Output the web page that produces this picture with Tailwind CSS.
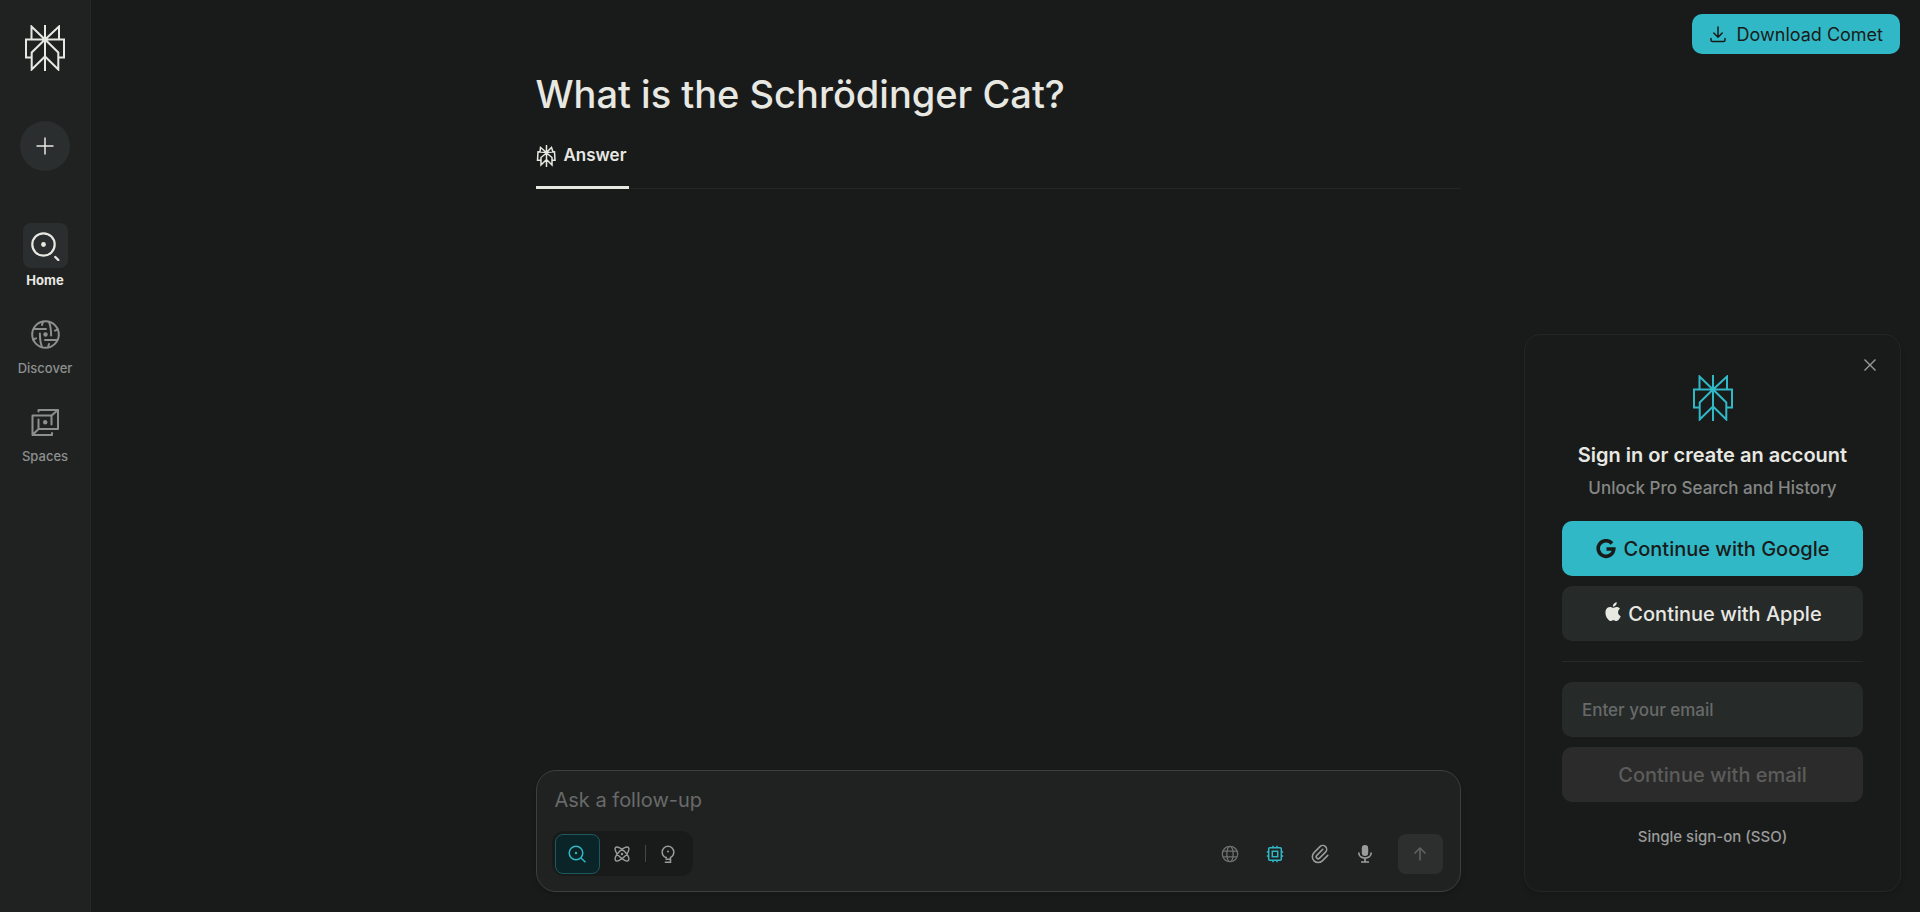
<!DOCTYPE html>
<html lang="en">
<head>
<meta charset="utf-8">
<meta name="viewport" content="width=device-width, initial-scale=1">
<title>What is the Schrödinger Cat?</title>
<script src="https://cdn.jsdelivr.net/npm/@tailwindcss/browser@4"></script>
</head>
<body class="flex h-screen overflow-hidden bg-[#191b1a] font-['Inter','Liberation_Sans',sans-serif] text-[#e8e8e3]">

<svg class="hidden" aria-hidden="true">
  <symbol id="logo" viewBox="0 0 40 46">
    <path fill="none" stroke="currentColor" d="M20 14.5H1V32.5H7M20 14.5H39V32.5H33M6.5 14.5V1.5L20 14.5 34 1.5V14.5M20 14.5 6.7 27.5V44.5L20 31.5 33.3 44.5V27.5ZM20 0V46"/>
  </symbol>
</svg>

<nav aria-label="Main" class="flex w-[91px] shrink-0 flex-col items-center border-r border-[#262828] bg-[#202222] pt-[25px]">
  <a href="#" aria-label="Perplexity home" class="block"><svg class="h-[46px] w-10 stroke-2"><use href="#logo"/></svg></a>
  <button type="button" aria-label="New thread" class="mt-[50px] grid size-[50px] place-items-center rounded-full bg-[#2a2e2e]">
    <svg class="size-[18px]" viewBox="0 0 18 18" fill="none" stroke="currentColor" stroke-width="1.5"><path d="M9 .5v17M.5 9h17"/></svg>
  </button>
  <ul class="mt-13 flex flex-col gap-[23px] text-[13px] leading-4 text-[#8d8f8e]">
    <li><a href="#" class="flex flex-col items-center gap-1 font-bold text-[#e8e8e3]">
      <span class="grid size-[45px] place-items-center rounded-lg bg-[#2a2e2e]">
        <svg class="size-[30px]" viewBox="0 0 30 30" fill="none" stroke="currentColor" stroke-width="2.2"><circle cx="13.500" cy="13.500" r="11.200"/><circle cx="13.500" cy="13.500" r="2.400" fill="currentColor" stroke="none"/><path stroke-width="2.400" stroke-linecap="round" d="M25.300 26l3 3"/></svg>
      </span>Home</a></li>
    <li><a href="#" class="flex flex-col items-center gap-1 font-medium">
      <span class="grid size-[45px] place-items-center">
        <svg class="size-[30px]" viewBox="0 0 30 30" fill="none" stroke="currentColor" stroke-width="2" stroke-linecap="round"><circle cx="15.500" cy="15.500" r="13.300"/><g transform="translate(.5 .5)"><circle cx="15" cy="15" r="2.200" fill="currentColor" stroke="none"/><path d="M3.500 9.400H15.500M26.500 20.600H14.500M9.400 14C9.400 19 9.700 23 11.500 27.500M20.600 16C20.600 11 20.300 7 18.500 2.500M11.500 5.500 12.500 2.200M18.500 24.500 17.500 27.800M5.500 18.800 2.600 20M24.500 11.200 27.400 10"/></g></svg>
      </span>Discover</a></li>
    <li><a href="#" class="flex flex-col items-center gap-1 font-medium">
      <span class="grid size-[45px] place-items-center">
        <svg class="size-[30px]" viewBox="0 0 30 30" fill="none" stroke="currentColor" stroke-width="2" stroke-linecap="round" stroke-linejoin="round"><path d="M8.500 4.500V3H28V22H8.500V12.500M2.500 8.500H21.500V17.500M21.500 8.500 28 3M2.500 8.500V28H22V26M2.500 28 8.500 22"/><circle cx="15.200" cy="15.300" r="2.200" fill="currentColor" stroke="none"/></svg>
      </span>Spaces</a></li>
  </ul>
</nav>

<main class="flex min-w-0 flex-1 justify-center pr-[15px]">
  <div class="flex w-full max-w-[925px] flex-col pb-5">
    <h1 class="pt-[70px] text-[38px] leading-12 font-medium">What is the Schrödinger Cat?</h1>
    <div role="tablist" class="mt-4 flex border-b border-[#242626]">
      <button type="button" role="tab" aria-selected="true" class="-mb-px flex h-[55px] items-center gap-2 border-b-3 border-[#e8e8e3] pr-[3px] pb-2 text-[17px] font-semibold">
        <svg class="h-[22px] w-5" viewBox="0 0 20 22" fill="none" stroke="currentColor" stroke-width="1.500"><path d="M10.500 0V22M10.500 7.500 4.500 2.500 4 7M10.500 7.500 15.500 2.500 17 7M10.500 7.500 2 6.800 1.500 15.200H5M10.500 7.500 18.500 6.800 19 15.200H16M10.500 8 5 12.500V20L10.500 14.500 16 20V12.500Z"/></svg>Answer</button>
    </div>
    <form class="mt-auto flex flex-col rounded-[20px] border border-[#3d3f3f] bg-[#202222] px-[15px] pt-[13px] pb-[15px] shadow-md">
      <input type="text" aria-label="Ask a follow-up" placeholder="Ask a follow-up" class="h-8 px-[3px] text-[20px] outline-none placeholder:text-[#686a69]">
      <div class="mt-[15px] flex items-center justify-between">
        <div class="flex h-[45px] items-center rounded-xl bg-[#191b1a] p-[3px]">
          <button type="button" aria-label="Search" class="grid h-10 w-[45px] place-items-center rounded-lg border border-[#1b5a60] bg-[#0b2427] text-[#31b8c6]">
            <svg class="size-[18px]" viewBox="0 0 18 18" fill="none" stroke="currentColor" stroke-width="1.500"><circle cx="8" cy="8" r="6.800"/><circle cx="8" cy="8" r="1.200" fill="currentColor" stroke="none"/><path d="M13 13l4.500 4.300"/></svg>
          </button>
          <button type="button" aria-label="Research" class="grid h-10 w-[45px] place-items-center text-[#9a9c9b]">
            <svg class="size-[22px]" viewBox="0 0 24 24" fill="none" stroke="currentColor" stroke-width="1.600"><path d="M19.071 4.929c-1.562-1.562-6 .337-9.900 4.243-3.905 3.905-5.804 8.337-4.242 9.900 1.562 1.561 6-.338 9.900-4.244 3.905-3.905 5.804-8.337 4.242-9.900M4.929 4.929c-1.562 1.562.337 6 4.243 9.900 3.905 3.905 8.337 5.804 9.900 4.242 1.561-1.562-.338-6-4.244-9.900-3.905-3.905-8.337-5.804-9.900-4.242"/><circle cx="12" cy="12" r="1.300" fill="currentColor" stroke="none"/></svg>
          </button>
          <span class="h-[17px] w-px bg-[#454747]"></span>
          <button type="button" aria-label="Labs" class="grid h-10 w-11 place-items-center text-[#9a9c9b]">
            <svg class="size-[18px]" viewBox="0 0 18 18" fill="none" stroke="currentColor" stroke-width="1.500"><path d="M6.500 14.300V14.300H11.500V12.400C13.700 11.500 14.800 9.300 14.800 7.100A5.800 5.800 0 0 0 3.200 7.100C3.200 9.300 4.300 11.500 6.500 12.400H8M11.500 14.300V17.200H5.800"/><circle cx="9" cy="6.500" r="1" fill="currentColor" stroke="none"/></svg>
          </button>
        </div>
        <div class="flex items-center text-[#9a9c9b]">
          <button type="button" aria-label="Choose a model" class="grid h-10 w-[45px] place-items-center text-[#6e706f]">
            <svg class="size-[18px]" viewBox="0 0 18 18" fill="none" stroke="currentColor" stroke-width="1.300"><circle cx="9" cy="9" r="7.700"/><ellipse cx="9" cy="9" rx="3.200" ry="7.700"/><path d="M2 6.200H16M2 11.800H16"/></svg>
          </button>
          <button type="button" aria-label="Sources" class="grid h-10 w-[45px] place-items-center text-[#31b8c6]">
            <svg class="size-[18px]" viewBox="0 0 18 18" fill="none" stroke="currentColor" stroke-width="1.500"><rect x="2.700" y="2.700" width="12.600" height="12.600" rx="1"/><rect x="6.300" y="6.300" width="5.400" height="5.400"/><path d="M7 .8V2.700M11 .8V2.700M7 15.300V17.200M11 15.300V17.200M.8 7H2.700M.8 11H2.700M15.300 7H17.200M15.300 11H17.200"/></svg>
          </button>
          <button type="button" aria-label="Attach" class="grid h-10 w-[45px] place-items-center">
            <svg class="size-[22px]" viewBox="0 0 24 24" fill="none" stroke="currentColor" stroke-width="1.700" stroke-linecap="round"><path d="M15 7l-6.500 6.500a1.500 1.500 0 0 0 3 3l6.500-6.500a3 3 0 0 0-6-6l-6.500 6.500a4.500 4.500 0 0 0 9 9l6-6"/></svg>
          </button>
          <button type="button" aria-label="Dictate" class="grid h-10 w-[45px] place-items-center">
            <svg class="size-[18px]" viewBox="0 0 18 18" fill="none" stroke="currentColor" stroke-width="1.700"><rect x="5.800" y="0" width="6.400" height="11" rx="3.200" fill="currentColor" stroke="none"/><path d="M2.800 7.500C2.800 11 5.500 13 9 13S15.200 11 15.200 7.500M9 13V17M5 17H13"/></svg>
          </button>
          <button type="submit" aria-label="Submit" disabled class="mr-0.5 ml-[10px] grid h-10 w-[45px] place-items-center rounded-lg bg-[#2d2f2f] text-[#616362]">
            <svg class="size-[18px]" viewBox="0 0 18 18" fill="none" stroke="currentColor" stroke-width="1.500"><path d="M9 15.500V3M3.500 8.500 9 3l5.500 5.500"/></svg>
          </button>
        </div>
      </div>
    </form>
  </div>
</main>

<!-- Floating download button and sign-in card -->
<aside class="pointer-events-none absolute inset-y-0 right-[19px] flex w-[377px] flex-col items-end justify-between pt-[14px] pb-5">
  <a href="#" class="pointer-events-auto mr-px flex h-10 items-center gap-[10px] rounded-[10px] bg-[#31b8c6] px-[17px] text-[18px] text-[#191b1a]">
    <svg class="size-[18px]" viewBox="0 0 18 18" fill="none" stroke="currentColor" stroke-width="1.500" stroke-linecap="round" stroke-linejoin="round"><path d="M9 2V12M4.800 8 9 12.200 13.200 8M2 13.500V15A1.500 1.500 0 0 0 3.500 16.500H14.500A1.500 1.500 0 0 0 16 15V13.500"/></svg>
    Download Comet</a>

  <section aria-labelledby="signin" class="pointer-events-auto relative flex w-full flex-col items-stretch rounded-[16px] border border-[#242626] bg-[#191b1a] px-[37px] pt-10 pb-[42px] text-center shadow-md">
    <button type="button" aria-label="Close" class="absolute top-5 right-5 grid size-5 place-items-center text-[#9a9c9b]">
      <svg class="size-3" viewBox="0 0 12 12" fill="none" stroke="currentColor" stroke-width="1.400"><path d="M.5.5l11 11M11.500.5l-11 11"/></svg>
    </button>
    <svg class="h-[46px] w-10 self-center stroke-2 text-[#31b8c6]"><use href="#logo"/></svg>
    <h2 id="signin" class="mt-5 text-[20px] leading-7 font-semibold">Sign in or create an account</h2>
    <p class="mt-[5px] text-[17px] leading-7 font-medium text-[#858786]">Unlock Pro Search and History</p>
    <button type="button" class="mt-[19px] flex h-[55px] items-center justify-center gap-2 rounded-[10px] bg-[#31b8c6] text-[20px] font-medium text-[#191b1a]">
      <svg class="size-5" viewBox="0 0 20 20" fill="none" stroke="currentColor" stroke-width="3.600"><path d="M16 4.500A7.800 7.800 0 1 0 17.800 10H10.500"/></svg>
      Continue with Google</button>
    <button type="button" class="mt-[10px] flex h-[55px] items-center justify-center gap-[7px] rounded-[10px] bg-[#262a29] text-[20px] font-medium">
      <svg class="mb-1 h-[23px] w-[18px]" viewBox="0 0 16 20" fill="currentColor"><path d="M13.400 10.600c0-2 1.600-3 1.700-3.100-1-1.400-2.400-1.600-3-1.600-1.300-.1-2.500.8-3.100.8-.7 0-1.700-.8-2.700-.7-1.400 0-2.700.8-3.400 2-1.500 2.500-.4 6.300 1 8.300.7 1 1.500 2.100 2.600 2.100s1.500-.7 2.700-.7c1.300 0 1.600.7 2.800.7 1.100 0 1.900-1 2.600-2 .8-1.200 1.100-2.300 1.200-2.400-.1 0-2.400-.9-2.400-3.400zM11.300 4.500c.6-.7 1-1.700.9-2.700-.9 0-1.900.6-2.500 1.300-.6.6-1 1.600-.9 2.600.9.100 1.900-.5 2.500-1.200z"/></svg>
      Continue with Apple</button>
    <hr class="my-5 border-[#272929]">
    <input type="email" aria-label="Email" placeholder="Enter your email" class="h-[55px] w-full rounded-[10px] bg-[#262a29] px-5 text-[17px] font-medium outline-none placeholder:text-[#686a69]">
    <button type="button" disabled class="mt-[10px] h-[55px] rounded-[10px] bg-[#2b2b2b] text-[20px] font-medium text-[#5c5c5b]">Continue with email</button>
    <a href="#" class="mt-[23px] self-center text-[15px] leading-6 font-medium text-[#9a9c9b]">Single sign-on (SSO)</a>
  </section>
</aside>
</body>
</html>
